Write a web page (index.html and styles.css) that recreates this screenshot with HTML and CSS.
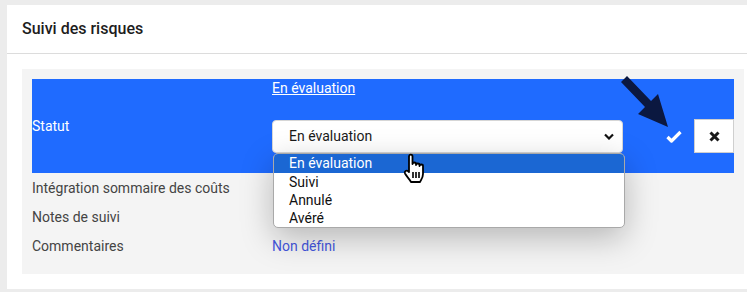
FILE: index.html
```html
<!DOCTYPE html>
<html>
<head>
  <meta charset="utf-8">
  <title>Suivi des risques</title>
  <link rel="stylesheet" href="styles.css">
</head>
<body>
  <div class="card">
    <div class="card-header">Suivi des risques</div>
    <div class="card-body">
      <div class="panel">
        <div class="field-row editing">
          <div class="field-label">Statut</div>
          <div class="field-value">
            <a class="value-link" href="#">En évaluation</a>
            <div class="editor">
              <div class="select-box">
                <span>En évaluation</span>
                <svg class="chevron" width="10" height="7" viewBox="0 0 10 7"><path d="M1 1.5 L5 5.5 L9 1.5" fill="none" stroke="#111" stroke-width="2.2"/></svg>
              </div>
              <button class="btn-ok" title="Valider">
                <svg width="16" height="13" viewBox="0 0 16 13"><path d="M1.5 7 L5.5 11 L14.5 2" fill="none" stroke="#fff" stroke-width="3.2" stroke-linejoin="round"/></svg>
              </button>
              <button class="btn-cancel" title="Annuler">
                <svg width="11" height="11" viewBox="0 0 11 11"><path d="M1.5 1.5 L9.5 9.5 M9.5 1.5 L1.5 9.5" stroke="#1a1a1a" stroke-width="3"/></svg>
              </button>

              <!-- open dropdown of the select -->
              <ul class="options">
                <li class="selected">En évaluation</li>
                <li>Suivi</li>
                <li>Annulé</li>
                <li>Avéré</li>
              </ul>
              <svg class="hand" width="26" height="32" viewBox="0 0 26 32">
                <path d="M6 4.5 C6 2 9.5 2 9.5 4.5 L9.5 12 C9.5 10 13 10 13 12 L13 13 C13 11 16.5 11 16.5 13 L16.5 14 C16.5 12 20 12 20 14 L20 22 C20 26 18 28 17 30 L8 30 C6.5 27 4 25 2 21.5 C1 19.5 3.5 17.5 5.5 19.5 L6 20 Z" fill="#fff" stroke="#000" stroke-width="1.8" stroke-linejoin="round"/>
                <path d="M10 20 L10 26 M13 20 L13 26 M16 20 L16 26" stroke="#000" stroke-width="1.6"/>
              </svg>
              <svg class="pointer-arrow" width="52" height="56" viewBox="0 0 52 56">
                <polygon points="7,1 31,26 38,19 48,52 18,39 25,32 1,7" fill="#0b1840"/>
              </svg>
            </div>
          </div>
        </div>
        <div class="field-row">
          <div class="field-label">Intégration sommaire des coûts</div>
          <div class="field-value"></div>
        </div>
        <div class="field-row">
          <div class="field-label">Notes de suivi</div>
          <div class="field-value"></div>
        </div>
        <div class="field-row">
          <div class="field-label">Commentaires</div>
          <div class="field-value"><a class="empty-link" href="#">Non défini</a></div>
        </div>
      </div>
    </div>
  </div>
</body>
</html>
```

FILE: styles.css
```css
html, body { margin: 0; }
body {
  background: #ececec;
  font-family: Roboto, "Liberation Sans", sans-serif;
  font-size: 14px;
  padding: 5px 0 0 7px;
  height: 292px;
  box-sizing: border-box;
  overflow: hidden;
}
.card { background: #fff; }
.card-header {
  height: 49px;
  box-sizing: border-box;
  padding: 14px 15px 0;
  border-bottom: 1px solid #dcdcdc;
  font-size: 16px;
  font-weight: 500;
  color: #1d1d1d;
}
.card-body { padding: 15px 3px 15px 15px; }
.panel {
  background: #f4f4f4;
  padding: 10px 10px 14px;
}
.field-row {
  display: grid;
  grid-template-columns: 240px 1fr;
  align-items: center;
  height: 29px;
  color: #444;
}
.field-row.editing {
  height: 94px;
  background: #1f6bff;
  color: #fff;
  align-items: start;
}
.editing .field-label { align-self: center; }
.field-value { display: flex; flex-direction: column; align-items: flex-start; }
.value-link {
  color: #fff;
  line-height: 18px;
}
.editor {
  position: relative;
  display: flex;
  align-items: center;
  margin-top: 22px;
}
.select-box {
  width: 351px;
  height: 33px;
  box-sizing: border-box;
  background: #fff;
  border: 1px solid #d6d6d6;
  border-radius: 4px;
  padding: 0 8px 0 16px;
  display: flex;
  align-items: center;
  justify-content: space-between;
  color: #1a1a1a;
}
.btn-ok {
  width: 40px;
  height: 34px;
  margin-left: 31px;
  padding: 0;
  border: 0;
  background: transparent;
  display: flex;
  align-items: center;
  justify-content: center;
}
.btn-cancel {
  width: 40px;
  height: 34px;
  padding: 0;
  background: #fff;
  border: 1px solid #cfcfcf;
  display: flex;
  align-items: center;
  justify-content: center;
}
.options {
  position: absolute;
  top: 34px;
  left: 1px;
  width: 350px;
  margin: 0;
  padding: 0;
  list-style: none;
  background: #fff;
  border: 1px solid #a9a9a9;
  border-radius: 5px;
  overflow: hidden;
  box-shadow: 0 10px 32px rgba(0, 0, 0, 0.25);
  color: #111;
}
.options li {
  height: 18px;
  line-height: 18px;
  padding-left: 15px;
}
.options li.selected {
  background: #1b67d3;
  color: #fff;
  height: 19px;
}
.hand { position: absolute; left: 131px; top: 33px; }
.pointer-arrow { position: absolute; left: 348px; top: -44px; }
.empty-link { color: #4457df; text-decoration: none; }
```
